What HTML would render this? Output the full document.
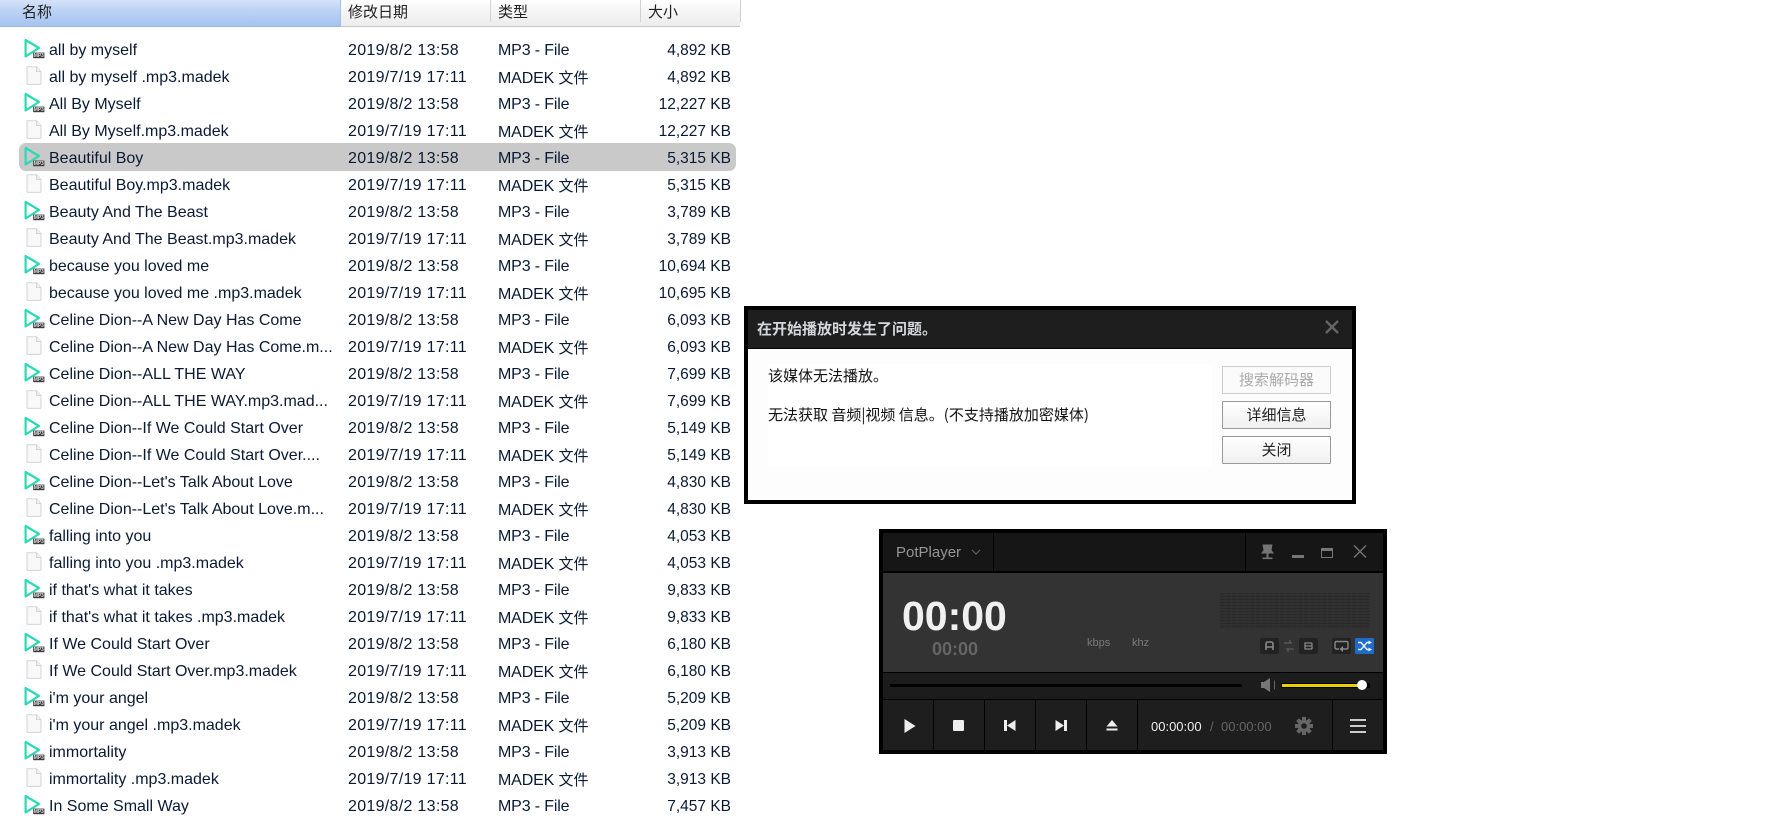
<!DOCTYPE html>
<html>
<head>
<meta charset="utf-8">
<title>PotPlayer</title>
<style>
html,body{margin:0;padding:0;background:#fff;}
body{width:1779px;height:807px;overflow:hidden;position:relative;font-family:"Liberation Sans","Noto Sans CJK SC",sans-serif;color:#0a1a33;}
.a{position:absolute;}
.hd{position:absolute;top:0;height:26px;}
.ht{position:absolute;top:2px;font-size:15px;line-height:20px;color:#222;font-family:"Noto Sans CJK SC",sans-serif;}
.r{position:absolute;left:0;width:740px;height:27px;font-size:16px;line-height:27px;white-space:nowrap;}
.r span{position:absolute;top:1px;}
.n{left:49px;}.d{left:348px;letter-spacing:.3px;}.t{left:498px;letter-spacing:-.15px;}.s{right:9px;font-size:15.5px;}
.r i{font-style:normal;font-size:15px;letter-spacing:0;font-family:"Noto Sans CJK SC",sans-serif;}
.r svg{position:absolute;}
.p{left:24px;top:2px;width:21px;height:21px;}
.f{left:26px;top:3px;width:16px;height:20px;}
.cj{font-family:"Noto Sans CJK SC",sans-serif;}
.btn{position:absolute;left:1222px;width:107px;height:26px;border:1px solid #999;border-radius:1px;background:linear-gradient(#fff,#f0f0f0);font-size:15px;line-height:26px;text-align:center;color:#222;font-family:"Noto Sans CJK SC",sans-serif;}
</style>
</head>
<body>
<svg width="0" height="0" style="position:absolute">
<defs>
<symbol id="pl" viewBox="0 0 21 21">
<path d="M1.6 2 L1.6 18.4 L15 10 Z" fill="none" stroke="#2bd9b5" stroke-width="2.2" stroke-linejoin="round"/>
<rect x="9.2" y="14.6" width="11.2" height="5.6" fill="#3c3c3c"/>
<text x="9.8" y="19.2" font-size="5" font-weight="bold" fill="#ddd" font-family="Liberation Sans" textLength="10">MP3</text>
</symbol>
<symbol id="fi" viewBox="0 0 16 20">
<path d="M1 .8 H10.5 L15 5.5 V17.5 Q15 18.4 14 18.4 H2 Q1 18.4 1 17.5 Z" fill="#f9f9f9" stroke="#d4d4d4"/>
<path d="M10.5 .8 V5.5 H15" fill="#eee" stroke="#d4d4d4"/>
</symbol>
</defs>
</svg>

<!-- header -->
<div class="hd" style="left:0;width:341px;background:linear-gradient(#d4e3f8 0%,#bcd3f4 40%,#a4c3f0 100%);border-bottom:1px solid #a0b8d8;"></div>
<div class="hd" style="left:341px;width:399px;background:linear-gradient(#fff 0%,#f6f6f6 40%,#ececec 100%);border-bottom:1px solid #c4c4c4;"></div>
<div class="a" style="left:340px;top:0;width:1px;height:26px;background:#a8c0e0;"></div>
<div class="a" style="left:490px;top:0;width:1px;height:22px;background:#d0d0d0;"></div>
<div class="a" style="left:640px;top:0;width:1px;height:22px;background:#d0d0d0;"></div>
<div class="a" style="left:740px;top:0;width:1px;height:22px;background:#d0d0d0;"></div>
<div class="ht" style="left:22px;">名称</div>
<div class="ht" style="left:348px;">修改日期</div>
<div class="ht" style="left:498px;">类型</div>
<div class="ht" style="left:648px;">大小</div>

<!-- selection -->
<div class="a" style="left:19px;top:143px;width:717px;height:28px;background:#c9c9c9;border-radius:7px;"></div>

<!-- rows -->
<div class="r" style="top:36px"><svg class="p"><use href="#pl"/></svg><span class="n">all by myself</span><span class="d">2019/8/2 13:58</span><span class="t">MP3 - File</span><span class="s">4,892 KB</span></div>
<div class="r" style="top:63px"><svg class="f"><use href="#fi"/></svg><span class="n">all by myself .mp3.madek</span><span class="d">2019/7/19 17:11</span><span class="t">MADEK <i>文件</i></span><span class="s">4,892 KB</span></div>
<div class="r" style="top:90px"><svg class="p"><use href="#pl"/></svg><span class="n">All By Myself</span><span class="d">2019/8/2 13:58</span><span class="t">MP3 - File</span><span class="s">12,227 KB</span></div>
<div class="r" style="top:117px"><svg class="f"><use href="#fi"/></svg><span class="n">All By Myself.mp3.madek</span><span class="d">2019/7/19 17:11</span><span class="t">MADEK <i>文件</i></span><span class="s">12,227 KB</span></div>
<div class="r" style="top:144px"><svg class="p"><use href="#pl"/></svg><span class="n">Beautiful Boy</span><span class="d">2019/8/2 13:58</span><span class="t">MP3 - File</span><span class="s">5,315 KB</span></div>
<div class="r" style="top:171px"><svg class="f"><use href="#fi"/></svg><span class="n">Beautiful Boy.mp3.madek</span><span class="d">2019/7/19 17:11</span><span class="t">MADEK <i>文件</i></span><span class="s">5,315 KB</span></div>
<div class="r" style="top:198px"><svg class="p"><use href="#pl"/></svg><span class="n">Beauty And The Beast</span><span class="d">2019/8/2 13:58</span><span class="t">MP3 - File</span><span class="s">3,789 KB</span></div>
<div class="r" style="top:225px"><svg class="f"><use href="#fi"/></svg><span class="n">Beauty And The Beast.mp3.madek</span><span class="d">2019/7/19 17:11</span><span class="t">MADEK <i>文件</i></span><span class="s">3,789 KB</span></div>
<div class="r" style="top:252px"><svg class="p"><use href="#pl"/></svg><span class="n">because you loved me</span><span class="d">2019/8/2 13:58</span><span class="t">MP3 - File</span><span class="s">10,694 KB</span></div>
<div class="r" style="top:279px"><svg class="f"><use href="#fi"/></svg><span class="n">because you loved me .mp3.madek</span><span class="d">2019/7/19 17:11</span><span class="t">MADEK <i>文件</i></span><span class="s">10,695 KB</span></div>
<div class="r" style="top:306px"><svg class="p"><use href="#pl"/></svg><span class="n">Celine Dion--A New Day Has Come</span><span class="d">2019/8/2 13:58</span><span class="t">MP3 - File</span><span class="s">6,093 KB</span></div>
<div class="r" style="top:333px"><svg class="f"><use href="#fi"/></svg><span class="n">Celine Dion--A New Day Has Come.m...</span><span class="d">2019/7/19 17:11</span><span class="t">MADEK <i>文件</i></span><span class="s">6,093 KB</span></div>
<div class="r" style="top:360px"><svg class="p"><use href="#pl"/></svg><span class="n">Celine Dion--ALL THE WAY</span><span class="d">2019/8/2 13:58</span><span class="t">MP3 - File</span><span class="s">7,699 KB</span></div>
<div class="r" style="top:387px"><svg class="f"><use href="#fi"/></svg><span class="n">Celine Dion--ALL THE WAY.mp3.mad...</span><span class="d">2019/7/19 17:11</span><span class="t">MADEK <i>文件</i></span><span class="s">7,699 KB</span></div>
<div class="r" style="top:414px"><svg class="p"><use href="#pl"/></svg><span class="n">Celine Dion--If We Could Start Over</span><span class="d">2019/8/2 13:58</span><span class="t">MP3 - File</span><span class="s">5,149 KB</span></div>
<div class="r" style="top:441px"><svg class="f"><use href="#fi"/></svg><span class="n">Celine Dion--If We Could Start Over....</span><span class="d">2019/7/19 17:11</span><span class="t">MADEK <i>文件</i></span><span class="s">5,149 KB</span></div>
<div class="r" style="top:468px"><svg class="p"><use href="#pl"/></svg><span class="n">Celine Dion--Let's Talk About Love</span><span class="d">2019/8/2 13:58</span><span class="t">MP3 - File</span><span class="s">4,830 KB</span></div>
<div class="r" style="top:495px"><svg class="f"><use href="#fi"/></svg><span class="n">Celine Dion--Let's Talk About Love.m...</span><span class="d">2019/7/19 17:11</span><span class="t">MADEK <i>文件</i></span><span class="s">4,830 KB</span></div>
<div class="r" style="top:522px"><svg class="p"><use href="#pl"/></svg><span class="n">falling into you</span><span class="d">2019/8/2 13:58</span><span class="t">MP3 - File</span><span class="s">4,053 KB</span></div>
<div class="r" style="top:549px"><svg class="f"><use href="#fi"/></svg><span class="n">falling into you .mp3.madek</span><span class="d">2019/7/19 17:11</span><span class="t">MADEK <i>文件</i></span><span class="s">4,053 KB</span></div>
<div class="r" style="top:576px"><svg class="p"><use href="#pl"/></svg><span class="n">if that's what it takes</span><span class="d">2019/8/2 13:58</span><span class="t">MP3 - File</span><span class="s">9,833 KB</span></div>
<div class="r" style="top:603px"><svg class="f"><use href="#fi"/></svg><span class="n">if that's what it takes .mp3.madek</span><span class="d">2019/7/19 17:11</span><span class="t">MADEK <i>文件</i></span><span class="s">9,833 KB</span></div>
<div class="r" style="top:630px"><svg class="p"><use href="#pl"/></svg><span class="n">If We Could Start Over</span><span class="d">2019/8/2 13:58</span><span class="t">MP3 - File</span><span class="s">6,180 KB</span></div>
<div class="r" style="top:657px"><svg class="f"><use href="#fi"/></svg><span class="n">If We Could Start Over.mp3.madek</span><span class="d">2019/7/19 17:11</span><span class="t">MADEK <i>文件</i></span><span class="s">6,180 KB</span></div>
<div class="r" style="top:684px"><svg class="p"><use href="#pl"/></svg><span class="n">i'm your angel</span><span class="d">2019/8/2 13:58</span><span class="t">MP3 - File</span><span class="s">5,209 KB</span></div>
<div class="r" style="top:711px"><svg class="f"><use href="#fi"/></svg><span class="n">i'm your angel .mp3.madek</span><span class="d">2019/7/19 17:11</span><span class="t">MADEK <i>文件</i></span><span class="s">5,209 KB</span></div>
<div class="r" style="top:738px"><svg class="p"><use href="#pl"/></svg><span class="n">immortality</span><span class="d">2019/8/2 13:58</span><span class="t">MP3 - File</span><span class="s">3,913 KB</span></div>
<div class="r" style="top:765px"><svg class="f"><use href="#fi"/></svg><span class="n">immortality .mp3.madek</span><span class="d">2019/7/19 17:11</span><span class="t">MADEK <i>文件</i></span><span class="s">3,913 KB</span></div>
<div class="r" style="top:792px"><svg class="p"><use href="#pl"/></svg><span class="n">In Some Small Way</span><span class="d">2019/8/2 13:58</span><span class="t">MP3 - File</span><span class="s">7,457 KB</span></div>

<!-- dialog -->
<div class="a" style="left:744px;top:306px;width:612px;height:198px;background:#000;"></div>
<div class="a" style="left:748px;top:310px;width:604px;height:38px;background:#1e1e1e;"></div>
<div class="a" style="left:748px;top:349px;width:604px;height:151px;background:#fdfdfd;"></div>
<div class="a" style="left:768px;top:364px;width:444px;height:103px;background:#fff;"></div>
<div class="a cj" style="left:757px;top:318px;font-size:15px;line-height:22px;font-weight:bold;color:#d4d8dc;white-space:nowrap;">在开始播放时发生了问题。</div>
<svg class="a" style="left:1325px;top:320px" width="14" height="14" viewBox="0 0 14 14"><path d="M1 1 L13 13 M13 1 L1 13" stroke="#666" stroke-width="2.4"/></svg>
<div class="a cj" style="left:768px;top:365px;font-size:15px;line-height:22px;color:#111;white-space:nowrap;">该媒体无法播放。</div>
<div class="a cj" style="left:768px;top:404px;font-size:15px;line-height:22px;color:#111;white-space:nowrap;">无法获取 音频|视频 信息。(不支持播放加密媒体)</div>
<div class="btn" style="top:366px;border-color:#ccc;color:#aaa;background:#fbfbfb;">搜索解码器</div>
<div class="btn" style="top:401px;">详细信息</div>
<div class="btn" style="top:436px;">关闭</div>

<!-- player -->
<div class="a" style="left:879px;top:529px;width:508px;height:225px;background:#000;"></div>
<div class="a" style="left:883px;top:533px;width:500px;height:38px;background:#161616;"></div>
<div class="a" style="left:993px;top:533px;width:1px;height:38px;background:#000;"></div>
<div class="a" style="left:1245px;top:533px;width:1px;height:38px;background:#000;"></div>
<div class="a" style="left:883px;top:573px;width:500px;height:99px;background:#333;"></div>
<div class="a" style="left:883px;top:673px;width:500px;height:26px;background:#1c1c1c;"></div>
<div class="a" style="left:883px;top:700px;width:500px;height:50px;background:#1e1e1e;"></div>
<div class="a" style="left:933px;top:700px;width:1px;height:50px;background:#000;"></div>
<div class="a" style="left:984px;top:700px;width:1px;height:50px;background:#000;"></div>
<div class="a" style="left:1035px;top:700px;width:1px;height:50px;background:#000;"></div>
<div class="a" style="left:1086px;top:700px;width:1px;height:50px;background:#000;"></div>
<div class="a" style="left:1137px;top:700px;width:1px;height:50px;background:#000;"></div>
<div class="a" style="left:1332px;top:700px;width:1px;height:50px;background:#000;"></div>

<div class="a" style="left:896px;top:543px;font-size:15px;line-height:20px;color:#969696;white-space:nowrap;">PotPlayer</div>
<svg class="a" style="left:971px;top:549px" width="10" height="6" viewBox="0 0 10 6"><path d="M1 1 L5 5 L9 1" fill="none" stroke="#666"/></svg>

<!-- window controls -->
<svg class="a" style="left:1260px;top:544px" width="15" height="16" viewBox="0 0 15 16"><path d="M2.5 .5 H12.5 L11.5 6 L14 9.5 H1 L3.5 6 Z" fill="#757575"/><rect x="6.5" y="9.5" width="2" height="4" fill="#757575"/><rect x="2.5" y="13.5" width="10" height="1.6" fill="#757575"/></svg>
<div class="a" style="left:1292px;top:555px;width:12px;height:3px;background:#777;"></div>
<div class="a" style="left:1321px;top:548px;width:10px;height:6px;border:1px solid #777;border-top:3px solid #777;"></div>
<svg class="a" style="left:1353px;top:545px" width="14" height="13" viewBox="0 0 14 13"><path d="M1 .5 L13 12.5 M13 .5 L1 12.5" stroke="#707070" stroke-width="1.5"/></svg>

<!-- display -->
<div class="a" style="left:902px;top:592px;font-size:41px;line-height:48px;font-weight:bold;color:#f0f0f0;white-space:nowrap;">00:00</div>
<div class="a" style="left:932px;top:638px;font-size:18px;line-height:22px;font-weight:bold;color:#666;white-space:nowrap;">00:00</div>
<div class="a" style="left:1087px;top:636px;font-size:11px;line-height:14px;color:#7a7a7a;">kbps</div>
<div class="a" style="left:1132px;top:636px;font-size:11px;line-height:14px;color:#7a7a7a;">khz</div>
<div class="a" style="left:1220px;top:593px;width:150px;height:36px;background:repeating-linear-gradient(to bottom,#292929 0 1px,#303030 1px 3px),#2c2c2c;"></div>
<div class="a" style="left:1220px;top:593px;width:150px;height:36px;background:repeating-linear-gradient(to right,rgba(51,51,51,0) 0 5px,rgba(51,51,51,.55) 5px 6px);"></div>

<div class="a" style="left:1260px;top:638px;width:19px;height:16px;background:#222;border-radius:2px;"></div>
<svg class="a" style="left:1265px;top:641px" width="9" height="10" viewBox="0 0 9 10"><path d="M1 9 V3 Q1 1 3 1 H6 Q8 1 8 3 V9 M1 6 H8" fill="none" stroke="#888" stroke-width="1.6"/></svg>
<svg class="a" style="left:1284px;top:639px" width="10" height="14" viewBox="0 0 10 14"><path d="M0 4 H8 M6 1 V4 M2 10 H10 M4 10 V13" fill="none" stroke="#666"/></svg>
<div class="a" style="left:1299px;top:638px;width:19px;height:16px;background:#222;border-radius:2px;"></div>
<svg class="a" style="left:1304px;top:642px" width="9" height="8" viewBox="0 0 9 8"><path d="M1 1 H7 Q8 1 8 2 V3 Q8 4 7 4 Q8 4 8 5 V6 Q8 7 7 7 H1 Z M1 4 H7" fill="none" stroke="#888" stroke-width="1.3"/></svg>
<div class="a" style="left:1332px;top:638px;width:19px;height:16px;background:#222;border-radius:2px;"></div>
<svg class="a" style="left:1334px;top:640px" width="15" height="13" viewBox="0 0 15 13"><path d="M5 9 H2.5 Q1 9 1 7.5 V3 Q1 1.5 2.5 1.5 H12.5 Q14 1.5 14 3 V7.5 Q14 9 12.5 9 H7" fill="none" stroke="#888" stroke-width="1.4"/><path d="M9 6 L5.5 9 L9 12 Z" fill="#888"/></svg>
<div class="a" style="left:1355px;top:638px;width:19px;height:16px;background:#1e6cc8;border-radius:1px;"></div>
<svg class="a" style="left:1358px;top:640px" width="14" height="12" viewBox="0 0 14 12"><path d="M0 2.5 H3 L9 9.5 H11 M0 9.5 H3 L9 2.5 H11" fill="none" stroke="#e8f0fa" stroke-width="1.4"/><path d="M10.5 .5 L14 2.5 L10.5 4.5 Z M10.5 7.5 L14 9.5 L10.5 11.5 Z" fill="#e8f0fa"/></svg>

<!-- seek + volume -->
<div class="a" style="left:890px;top:684px;width:352px;height:3px;background:#000;"></div>
<svg class="a" style="left:1260px;top:677px" width="16" height="16" viewBox="0 0 16 16"><path d="M1 5 H4 L10 1 V15 L4 11 H1 Z" fill="#777"/><rect x="14" y="3.5" width="1" height="9" fill="#666"/></svg>
<div class="a" style="left:1281px;top:683px;width:89px;height:5px;background:#000;"></div>
<div class="a" style="left:1282px;top:684px;width:80px;height:3px;background:#e8cf00;"></div>
<div class="a" style="left:1357px;top:680px;width:10px;height:10px;background:#fff;border-radius:50%;"></div>

<!-- transport -->
<svg class="a" style="left:904px;top:719px" width="12" height="14" viewBox="0 0 12 14"><path d="M.5 0 L11.5 7 L.5 14 Z" fill="#eee"/></svg>
<div class="a" style="left:953px;top:720px;width:11px;height:11px;background:#eee;border-radius:1px;"></div>
<svg class="a" style="left:1004px;top:720px" width="12" height="11" viewBox="0 0 12 11"><path d="M0 0 H3 V11 H0 Z M3 5.5 L11.5 0 V11 Z" fill="#eee"/></svg>
<svg class="a" style="left:1055px;top:720px" width="12" height="11" viewBox="0 0 12 11"><path d="M.5 0 L9 5.5 L.5 11 Z M9 0 H12 V11 H9 Z" fill="#eee"/></svg>
<svg class="a" style="left:1106px;top:720px" width="12" height="11" viewBox="0 0 12 11"><path d="M6 0 L11.5 6.5 H.5 Z" fill="#eee"/><rect x=".5" y="8.5" width="11" height="2" fill="#eee"/></svg>
<div class="a" style="left:1151px;top:719px;font-size:13px;line-height:16px;color:#eee;white-space:nowrap;">00:00:00</div>
<div class="a" style="left:1210px;top:719px;font-size:13px;line-height:16px;color:#666;">/</div>
<div class="a" style="left:1221px;top:719px;font-size:13px;line-height:16px;color:#666;white-space:nowrap;">00:00:00</div>
<svg class="a" style="left:1295px;top:717px" width="18" height="18" viewBox="0 0 18 18"><g fill="#666"><circle cx="9" cy="9" r="6.2"/><rect x="7" y="0" width="4" height="18"/><rect x="7" y="0" width="4" height="18" transform="rotate(45 9 9)"/><rect x="7" y="0" width="4" height="18" transform="rotate(90 9 9)"/><rect x="7" y="0" width="4" height="18" transform="rotate(135 9 9)"/></g><circle cx="9" cy="9" r="2.8" fill="#1e1e1e"/></svg>
<div class="a" style="left:1350px;top:719px;width:16px;height:2px;background:#ccc;"></div>
<div class="a" style="left:1350px;top:725px;width:16px;height:2px;background:#ccc;"></div>
<div class="a" style="left:1350px;top:731px;width:16px;height:2px;background:#ccc;"></div>
</body>
</html>
